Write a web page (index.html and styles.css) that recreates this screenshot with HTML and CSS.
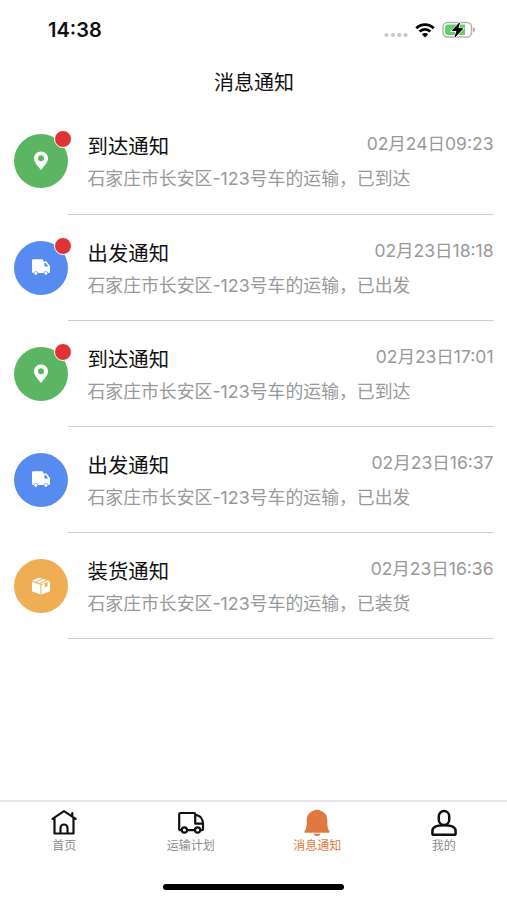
FILE: index.html
```html
<!DOCTYPE html>
<html lang="zh-CN">
<head>
    <meta charset="UTF-8">
    <meta name="viewport" content="width=device-width, initial-scale=1.0">
    <title>消息通知</title>
    <link rel="stylesheet" href="styles.css">
</head>
<body>
    <!-- shared icons -->
    <svg class="sprite" width="0" height="0">
        <symbol id="icon-pin" viewBox="0 0 20 20">
            <path fill-rule="evenodd" d="M10 .5C5.900.5 3 3.500 3 7.300 3 12 7.500 15.500 10 19c2.500-3.500 7-7 7-11.700C17 3.500 14.100.5 10 .5zM10 4.300a3 3 0 1 1 0 6 3 3 0 0 1 0-6z"/>
        </symbol>
        <symbol id="icon-van" viewBox="0 0 20 20">
            <path fill-rule="evenodd" d="M2.300 1.200h8.700q1.300 0 1.300 1.300V3.500h3.200L19 8v5.500q0 1.500-1.500 1.500h-.4a2.300 2.300 0 0 0-4.500 0H7.100a2.300 2.300 0 0 0-4.500 0h-.3Q1 15 1 13.500V2.500q0-1.300 1.300-1.300zM13.500 5v3.500h3.800L14.800 5z"/>
            <circle cx="4.800" cy="15.300" r="1.500"/>
            <circle cx="14.900" cy="15.300" r="1.500"/>
        </symbol>
        <symbol id="icon-box" viewBox="0 0 20 20">
            <path d="M1.300 4.500L8.200 1.500l3 .9L4.300 5.700zM5.500 6.100l7.200-3.200 2.500.8-6.700 3.500zM9.800 7.500l6.600-3.300 2.400.8-3.200 1.500-5.600 1.900zM1 5.700l8.400 3v9.800L1 15.200zM10.400 8.900l3.400-1.200v4l1.500-1.500 1.200.5V6.800L19 5.700v9.500l-8.600 3.300z"/>
        </symbol>
    </svg>

    <div class="app">
        <div class="status-bar">
            <span class="time">14:38</span>
            <div class="status-icons">
                <svg class="signal" width="24" height="6" viewBox="0 0 24 6" fill="#c6c6c6">
                    <circle cx="2.500" cy="3" r="2.100"/>
                    <circle cx="9" cy="3" r="2.100"/>
                    <circle cx="15.300" cy="3" r="2.100"/>
                    <circle cx="21.500" cy="3" r="2.100"/>
                </svg>
                <svg class="wifi" width="20" height="15" viewBox="0 0 20 15">
                    <path d="M1.300 5.200a12.500 12.500 0 0 1 17.400 0M4.600 8.500a7.800 7.800 0 0 1 10.800 0" fill="none" stroke="#000" stroke-width="2.800"/>
                    <path d="M6.800 11.300a4.600 4.600 0 0 1 6.400 0L10 14.600z"/>
                </svg>
                <svg class="battery" width="34" height="18" viewBox="0 0 34 18">
                    <rect x="1" y="1.500" width="28.500" height="14.500" rx="4.500" fill="#fff" stroke="#b4b4b4" stroke-width="1.500"/>
                    <path d="M6 3.500h17v10.500H6q-3 0-3-3V6.500q0-3 3-3z" fill="#65cd69"/>
                    <path d="M31 6.200q2.300.8 2.300 2.600T31 11.400z" fill="#b4b4b4"/>
                    <path d="M17.800 1.500L10 9.800h4.800l-2.200 6.700 8.300-8.900h-4.800z" stroke="#fff" stroke-width="1.800" paint-order="stroke"/>
                    <path d="M17.500 2L10.300 9.500h4.900l-2.200 6.500 7.500-8.200h-4.900z" stroke="#000" stroke-width=".8"/>
                </svg>
            </div>
        </div>

        <h1 class="page-title">消息通知</h1>

        <div class="messages">
            <div class="message">
                <div class="avatar green">
                    <svg class="avatar-icon"><use href="#icon-pin"/></svg>
                    <span class="badge"></span>
                </div>
                <div class="message-body">
                    <div class="message-head">
                        <span class="message-title">到达通知</span>
                        <span class="message-date">02月24日09:23</span>
                    </div>
                    <p class="message-text">石家庄市长安区-123号车的运输，已到达</p>
                </div>
            </div>
            <div class="message">
                <div class="avatar blue">
                    <svg class="avatar-icon"><use href="#icon-van"/></svg>
                    <span class="badge"></span>
                </div>
                <div class="message-body">
                    <div class="message-head">
                        <span class="message-title">出发通知</span>
                        <span class="message-date">02月23日18:18</span>
                    </div>
                    <p class="message-text">石家庄市长安区-123号车的运输，已出发</p>
                </div>
            </div>
            <div class="message">
                <div class="avatar green">
                    <svg class="avatar-icon"><use href="#icon-pin"/></svg>
                    <span class="badge"></span>
                </div>
                <div class="message-body">
                    <div class="message-head">
                        <span class="message-title">到达通知</span>
                        <span class="message-date">02月23日17:01</span>
                    </div>
                    <p class="message-text">石家庄市长安区-123号车的运输，已到达</p>
                </div>
            </div>
            <div class="message">
                <div class="avatar blue">
                    <svg class="avatar-icon"><use href="#icon-van"/></svg>
                </div>
                <div class="message-body">
                    <div class="message-head">
                        <span class="message-title">出发通知</span>
                        <span class="message-date">02月23日16:37</span>
                    </div>
                    <p class="message-text">石家庄市长安区-123号车的运输，已出发</p>
                </div>
            </div>
            <div class="message">
                <div class="avatar orange">
                    <svg class="avatar-icon"><use href="#icon-box"/></svg>
                </div>
                <div class="message-body">
                    <div class="message-head">
                        <span class="message-title">装货通知</span>
                        <span class="message-date">02月23日16:36</span>
                    </div>
                    <p class="message-text">石家庄市长安区-123号车的运输，已装货</p>
                </div>
            </div>
        </div>

        <nav class="tab-bar">
            <a class="tab">
                <svg class="tab-icon" viewBox="0 0 28 28">
                    <path d="M2.500 9.800L14 2.200l11.700 7.600M4.500 8.500V24.500h19V8.500M22.300 7.500V4M10.500 24.500V19a3.500 3.500 0 0 1 7 0v5.500"/>
                </svg>
                <span>首页</span>
            </a>
            <a class="tab">
                <svg class="tab-icon" viewBox="0 0 28 28">
                    <path d="M4.500 21.200H3.500Q2.200 21.200 2.200 20V5.200Q2.200 4 3.500 4H17q1.200 0 1.200 1.200V14.700H26M18.200 6.200H20q6 1.500 6 8.500V20q0 1.200-1.200 1.200h-1.300M10.200 21.200H17.500"/>
                    <circle cx="7.400" cy="21" r="2.600"/>
                    <circle cx="20.600" cy="21" r="2.600"/>
                </svg>
                <span>运输计划</span>
            </a>
            <a class="tab active">
                <svg class="tab-icon" viewBox="0 0 28 28">
                    <path d="M14 .8c1.700 0 2.900.3 3.500.9 4.600 1.400 6.800 4.900 6.800 9.300 0 5.500.2 8.500 2.200 11.300v1.400h-25v-1.400c2-2.800 2.200-5.800 2.200-11.300 0-4.400 2.200-7.900 6.800-9.300.6-.6 1.800-.9 3.500-.9zM10.300 24.700h7.400Q16.800 27 14 27t-3.700-2.300z"/>
                </svg>
                <span>消息通知</span>
            </a>
            <a class="tab">
                <svg class="tab-icon person" viewBox="0 0 28 28">
                    <rect x="8.800" y="2" width="10.400" height="14" rx="5.200"/>
                    <path d="M14 16.300c-7 0-11.600 2-11.600 5.700v2.500q0 1.300 1.300 1.300h20.600q1.300 0 1.300-1.300V22c0-3.700-4.600-5.700-11.600-5.700z"/>
                </svg>
                <span>我的</span>
            </a>
        </nav>
        <div class="home-indicator"></div>
    </div>
</body>
</html>
```

FILE: styles.css
```css
* {
    box-sizing: border-box;
}
body {
    margin: 0;
    background: #fff;
    color: #111;
    font-family: Inter, 'Noto Sans CJK SC', sans-serif;
}
.sprite {
    display: block;
}
.app {
    display: flex;
    flex-direction: column;
    width: 100%;
    height: 900px;
    overflow: hidden;
}

/* status bar */
.status-bar {
    display: flex;
    justify-content: space-between;
    align-items: center;
    height: 60px;
    padding: 0 31px 0 48px;
}
.time {
    font-size: 20px;
    font-weight: 600;
    line-height: 24px;
}
.status-icons {
    display: flex;
    align-items: center;
}
.signal {
    margin: 9px 7px 0 0;
}
.wifi {
    margin-right: 7px;
}

.page-title {
    height: 48.400px;
    margin: 0;
    padding-left: 1px;
    font-size: 20px;
    font-weight: 400;
    line-height: 46px;
    text-align: center;
}

/* message list */
.messages {
    flex: 1;
}
.message {
    display: flex;
    height: 106.200px;
    padding: 0 13px 0 14px;
}
.avatar {
    position: relative;
    display: flex;
    flex: none;
    align-items: center;
    justify-content: center;
    width: 54px;
    height: 54px;
    margin-top: 26px;
    border-radius: 50%;
}
.green {
    background: #5bb563;
}
.blue {
    background: #588bef;
}
.orange {
    background: #efad54;
}
.avatar-icon {
    width: 20px;
    height: 20px;
    fill: #fff;
}
.badge {
    position: absolute;
    top: -4px;
    right: -4px;
    width: 18px;
    height: 18px;
    border: 1px solid #fff;
    border-radius: 50%;
    background: #df3335;
}
.message-body {
    flex: 1;
    padding: 21px 0 0 19.500px;
    border-bottom: 1px solid #cfcfcf;
}
.message-head {
    display: flex;
    justify-content: space-between;
    height: 32px;
}
.message-title {
    font-size: 20.400px;
    line-height: 35px;
}
.message-date {
    margin-right: .5px;
    color: #999;
    font-size: 17.500px;
    line-height: 30px;
}
.message-text {
    margin: 4px 0 0;
    color: #999;
    font-size: 17.850px;
    line-height: 28px;
    white-space: nowrap;
}

/* bottom tabs */
.tab-bar {
    display: flex;
    height: 84px;
    padding: 7px 0 0 1px;
    border-top: 2px solid #e6e6e6;
}
.tab {
    display: flex;
    flex: 1;
    flex-direction: column;
    align-items: center;
    color: #8c8c8c;
    font-size: 12px;
    line-height: 18px;
}
.tab-icon {
    width: 28px;
    height: 28px;
    fill: none;
    stroke: #111;
    stroke-width: 2.200;
    stroke-linecap: round;
    stroke-linejoin: round;
}
.person {
    stroke-width: 2.500;
}
.active {
    color: #df7841;
}
.active .tab-icon {
    fill: #df7841;
    stroke: none;
}
.home-indicator {
    width: 181px;
    height: 6px;
    margin: 0 auto 10px;
    border-radius: 3px;
    background: #000;
}
```
